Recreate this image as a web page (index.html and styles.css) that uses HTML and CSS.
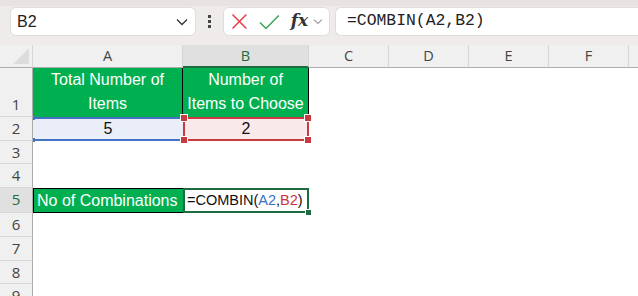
FILE: index.html
```html
<!DOCTYPE html>
<html lang="en">
<head>
<meta charset="UTF-8" />
<title>COMBIN</title>
<link rel="stylesheet" href="styles.css">
</head>
<body>

<div class="toolbar">
  <div class="namebox">
    <span>B2</span>
    <svg width="12" height="8" viewBox="0 0 12 8"><path d="M1 1.5 L6 6.5 L11 1.5" fill="none" stroke="#333" stroke-width="1.3"/></svg>
  </div>
  <div class="grip"><i></i><i></i><i></i></div>
  <div class="fxbox">
    <svg width="17" height="17" viewBox="0 0 17 17"><path d="M1.5 1.5 L15.5 15.5 M15.5 1.5 L1.5 15.5" stroke="#e5424a" stroke-width="1.6"/></svg>
    <svg width="21" height="16" viewBox="0 0 21 16"><path d="M1 8.5 L7 14.5 L20 1.5" fill="none" stroke="#3aa655" stroke-width="1.6"/></svg>
    <span class="fx">fx</span>
    <svg width="10" height="7" viewBox="0 0 10 7"><path d="M1 1.5 L5 5.5 L9 1.5" fill="none" stroke="#999" stroke-width="1.1"/></svg>
  </div>
  <div class="formula">=COMBIN(A2,B2)</div>
</div>

<div class="sheet">
  <!-- column headers -->
  <div class="corner"><span class="tri"></span></div>
  <div class="ch">A</div>
  <div class="ch sel">B</div>
  <div class="ch">C</div>
  <div class="ch">D</div>
  <div class="ch">E</div>
  <div class="ch">F</div>
  <div class="ch last"></div>

  <!-- row 1 -->
  <div class="rh r1">1</div>
  <div class="cell head">Total Number of<br>Items</div>
  <div class="cell head">Number of<br>Items to Choose</div>
  <div></div><div></div><div></div><div></div><div></div>

  <!-- row 2 -->
  <div class="rh">2</div>
  <div class="cell ref-a">5<b class="dot tl"></b><b class="dot bl"></b></div>
  <div class="cell ref-b">2<b class="sq tl"></b><b class="sq tr"></b><b class="sq bl"></b><b class="sq br"></b></div>
  <div></div><div></div><div></div><div></div><div></div>

  <!-- row 3 -->
  <div class="rh">3</div>
  <div></div><div></div><div></div><div></div><div></div><div></div><div></div>

  <!-- row 4 -->
  <div class="rh">4</div>
  <div></div><div></div><div></div><div></div><div></div><div></div><div></div>

  <!-- row 5 -->
  <div class="rh sel">5</div>
  <div class="cell label">No of Combinations</div>
  <div class="cell active">=COMBIN(<span class="blue">A2</span>,<span class="red">B2</span>)<b class="fill"></b></div>
  <div></div><div></div><div></div><div></div><div></div>

  <!-- rows 6-9 -->
  <div class="rh">6</div>
  <div></div><div></div><div></div><div></div><div></div><div></div><div></div>
  <div class="rh">7</div>
  <div></div><div></div><div></div><div></div><div></div><div></div><div></div>
  <div class="rh">8</div>
  <div></div><div></div><div></div><div></div><div></div><div></div><div></div>
  <div class="rh">9</div>
  <div></div><div></div><div></div><div></div><div></div><div></div><div></div>
</div>

</body>
</html>
```

FILE: styles.css
```css
/* --- basics --- */
* {
  margin: 0; padding: 0; box-sizing: border-box;
}
html, body {
  height: 100%;
  overflow: hidden;
  background: #fff;
  font-family: "Liberation Sans", Arial, sans-serif;
}

/* --- toolbar with name box and formula bar --- */
.toolbar {
  height: 45px;
  background: #efebeb;
  border-top: 6px solid #e8e3e3;
  display: flex;
  align-items: flex-start;
  padding: 1px 0 0 10px;
}
.namebox {
  width: 186px;
  height: 29px;
  background: #fff;
  border: 1px solid #e0dcdc;
  border-radius: 6px;
  display: flex;
  align-items: center;
  justify-content: space-between;
  padding: 0 7px 0 6px;
  font-size: 16px;
  color: #222;
}
.grip {
  width: 27px;
  height: 29px;
  display: flex;
  flex-direction: column;
  align-items: center;
  justify-content: center;
  gap: 2px;
}
.grip i {
  width: 3px; height: 3px;
  background: #444;
}
.fxbox {
  width: 107px;
  height: 29px;
  background: #fff;
  border: 1px solid #e0dcdc;
  border-radius: 6px;
  display: flex;
  align-items: center;
  padding: 0 6px 0 7px;
}
.fxbox svg:nth-child(2) {
  margin-left: 11px;
}
.fx {
  font-family: "DejaVu Serif", "Liberation Serif", serif;
  font-style: italic;
  font-weight: bold;
  font-size: 17px;
  color: #333;
  margin: -3px 0 0 11px;
}
.fxbox svg:last-child {
  margin-left: 5px;
}
.formula {
  flex: 1;
  height: 29px;
  margin-left: 5px;
  background: #fff;
  border: 1px solid #e0dcdc;
  border-right: none;
  border-radius: 6px 0 0 6px;
  padding: 3px 0 0 11px;
  font-family: "Liberation Mono", "DejaVu Sans Mono", monospace;
  font-size: 16.4px;
  color: #222;
}

/* --- sheet grid --- */
.sheet {
  display: grid;
  grid-template-columns: 33px 150px 126px 80px 80px 80px 80px 1fr;
  grid-template-rows: 23px 49px 24px 23px 24px 25px 24px 24px 23px 24px;
  font-size: 16px;
}
.corner {
  background: #f0f0f0;
  border-right: 1px solid #d5d5d5;
  border-bottom: 1px solid #ababab;
  position: relative;
}
.tri {
  position: absolute;
  right: 3px; bottom: 3px;
  width: 0; height: 0;
  border-left: 16px solid transparent;
  border-bottom: 16px solid #dcdcdc;
}
.ch {
  background: #f0f0f0;
  border-right: 1px solid #d5d5d5;
  border-bottom: 1px solid #ababab;
  text-align: center;
  line-height: 22px;
  font-family: "Open Sans", sans-serif;
  font-size: 14.5px;
  color: #444;
}
.ch.sel {
  background: #e0e0e0;
  color: #1e6b41;
  border-bottom: 2px solid #1e6b41;
}
.ch.last {
  border-right: none;
}
.rh {
  background: #f0f0f0;
  border-right: 1px solid #ababab;
  border-bottom: 1px solid #d5d5d5;
  text-align: center;
  font-family: "Open Sans", sans-serif;
  font-size: 15px;
  color: #444;
  line-height: 23px;
}
.rh.r1 {
  display: flex;
  align-items: flex-end;
  justify-content: center;
}
.rh.sel {
  background: #e0e0e0;
  color: #1e6b41;
}

/* --- cells --- */
.cell {
  position: relative;
  color: #111;
}
.head {
  background: #00b050;
  color: #fff;
  border-right: 1px solid #000;
  text-align: center;
  line-height: 24px;
  display: flex;
  align-items: flex-end;
  justify-content: center;
  padding-bottom: 1px;
}
.ref-a {
  background: #e9eef8;
  border-top: 2px solid #4472c4;
  border-bottom: 2px solid #4472c4;
  text-align: center;
  line-height: 20px;
}
.ref-b {
  background: #fae9ea;
  border: 2px solid #c83a41;
  text-align: center;
  line-height: 20px;
}
.dot {
  position: absolute;
  left: 0;
  width: 2px; height: 4px;
  background: #4472c4;
}
.dot.tl { top: -3px; }
.dot.bl { bottom: -3px; }
.sq {
  position: absolute;
  width: 6px; height: 6px;
  background: #c83a41;
  outline: 1px solid #fff;
}
.sq.tl { left: -4px; top: -4px; }
.sq.tr { right: -4px; top: -4px; }
.sq.bl { left: -4px; bottom: -4px; }
.sq.br { right: -4px; bottom: -4px; }
.label {
  background: #00b050;
  color: #fff;
  border: 1px solid #000;
  border-right: none;
  padding-left: 3px;
  line-height: 23px;
}
.active {
  border: 2px solid #1e6b41;
  padding-left: 2px;
  line-height: 21px;
  font-size: 14.5px;
  white-space: nowrap;
  z-index: 1;
}
.blue { color: #3c6fc8; }
.red { color: #c8343b; }
.fill {
  position: absolute;
  right: -4px; bottom: -4px;
  width: 5px; height: 5px;
  background: #1e6b41;
  outline: 1px solid #fff;
}
```
